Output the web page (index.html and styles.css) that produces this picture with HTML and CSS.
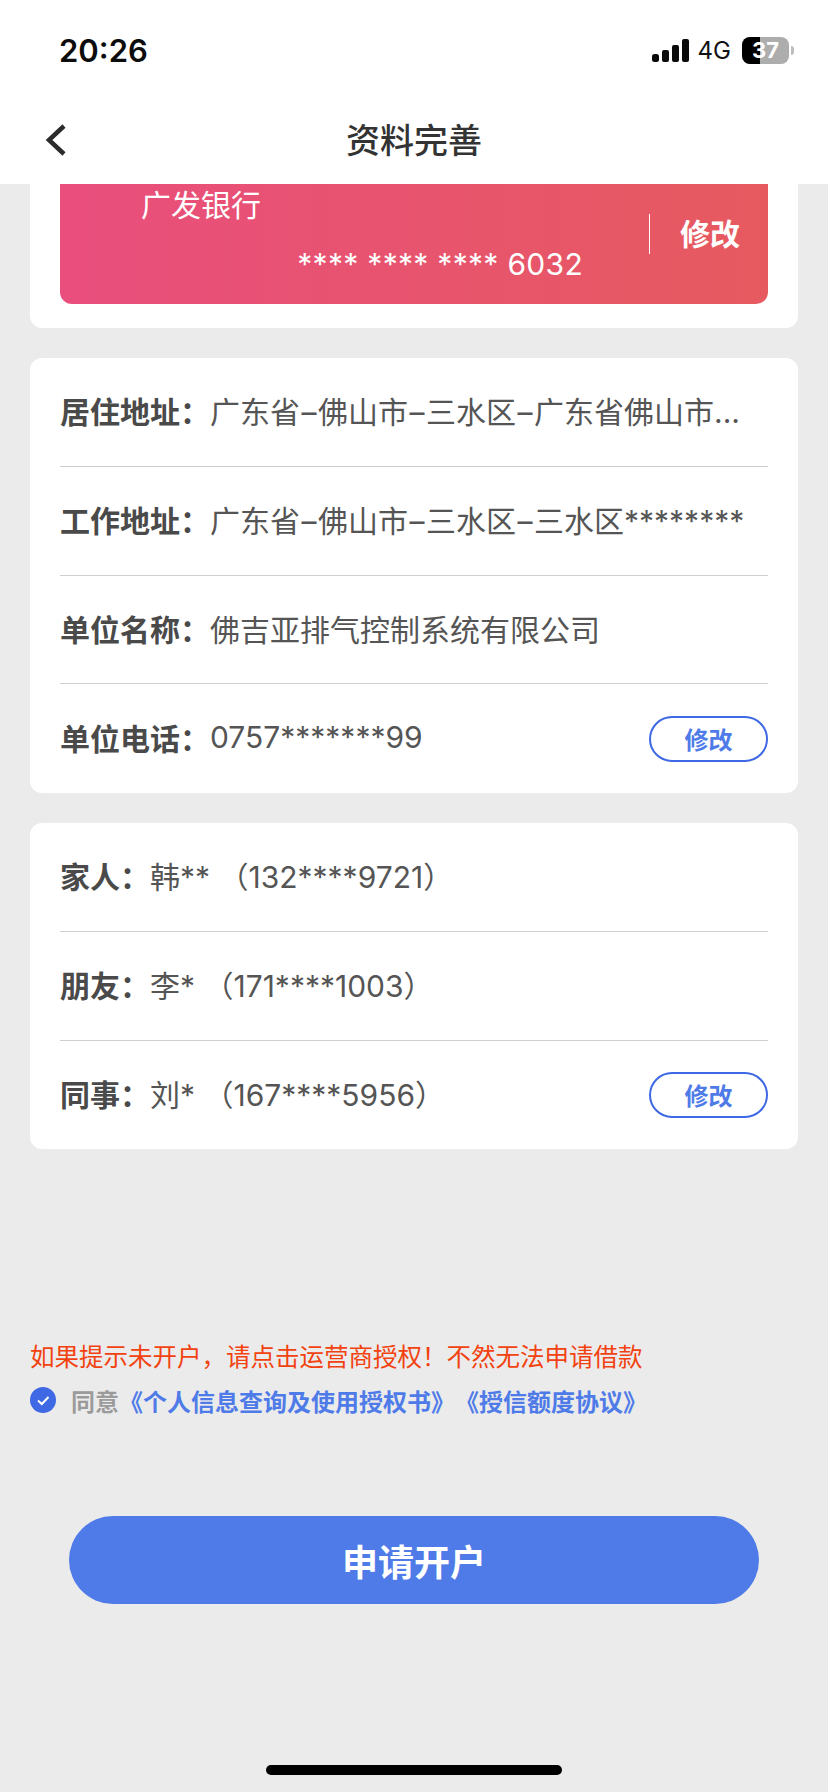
FILE: index.html
```html
<!DOCTYPE html>
<html lang="zh-CN">
<head>
    <meta charset="UTF-8">
    <meta name="viewport" content="width=device-width, initial-scale=1.0">
    <title>资料完善</title>
    <link rel="stylesheet" href="styles.css">
</head>
<body>
<div class="phone">
    <header class="top">
        <div class="status-bar">
            <span class="time">20:26</span>
            <div class="status-right">
                <svg class="signal" width="37" height="23" viewBox="0 0 37 23">
                    <rect x="0" y="15" width="7" height="8" rx="2.5"/>
                    <rect x="10" y="11" width="7" height="12" rx="2"/>
                    <rect x="20" y="6" width="7" height="17" rx="2"/>
                    <rect x="30" y="0" width="7" height="23" rx="2"/>
                </svg>
                <span class="net">4G</span>
                <div class="battery">
                    <div class="battery-fill"></div>
                    <span class="battery-num">37</span>
                </div>
                <div class="battery-cap"></div>
            </div>
        </div>
        <div class="nav">
            <svg class="back" width="22" height="32" viewBox="0 0 22 32">
                <path d="M19 2 L4 16 L19 30" fill="none" stroke="#2b2b2b" stroke-width="4.5"/>
            </svg>
            <h1>资料完善</h1>
        </div>
    </header>

    <main>
        <section class="card card-bank">
            <div class="bank">
                <div class="bank-info">
                    <div class="bank-name">广发银行</div>
                    <div class="bank-no">**** **** **** 6032</div>
                </div>
                <div class="bank-edit">修改</div>
            </div>
        </section>

        <section class="card">
            <div class="row">
                <span class="label">居住地址：</span>
                <span class="value">广东省<span class="dash">–</span>佛山市<span class="dash">–</span>三水区<span class="dash">–</span>广东省佛山市...</span>
            </div>
            <div class="row">
                <span class="label">工作地址：</span>
                <span class="value">广东省<span class="dash">–</span>佛山市<span class="dash">–</span>三水区<span class="dash">–</span>三水区********</span>
            </div>
            <div class="row">
                <span class="label">单位名称：</span>
                <span class="value">佛吉亚排气控制系统有限公司</span>
            </div>
            <div class="row">
                <span class="label">单位电话：</span>
                <span class="value">0757*******99</span>
                <button class="edit-btn">修改</button>
            </div>
        </section>

        <section class="card">
            <div class="row">
                <span class="label">家人：</span>
                <span class="value">韩** （132****9721）</span>
            </div>
            <div class="row">
                <span class="label">朋友：</span>
                <span class="value">李* （171****1003）</span>
            </div>
            <div class="row">
                <span class="label">同事：</span>
                <span class="value">刘* （167****5956）</span>
                <button class="edit-btn">修改</button>
            </div>
        </section>

        <p class="notice">如果提示未开户，请点击运营商授权！不然无法申请借款</p>
        <div class="agree">
            <svg class="check" width="26" height="26" viewBox="0 0 26 26">
                <circle cx="13" cy="13" r="13" fill="#3e68e4"/>
                <path d="M8 13.5 L11.8 17 L18.5 10" fill="none" stroke="#fff" stroke-width="2"/>
            </svg>
            <span class="agree-text">同意</span>
            <span class="agree-link">《个人信息查询及使用授权书》《授信额度协议》</span>
        </div>

        <button class="submit">申请开户</button>
    </main>

    <div class="home-bar"></div>
</div>
</body>
</html>
```

FILE: styles.css
```css
* {
    box-sizing: border-box;
}

body {
    margin: 0;
    padding: 0;
    background: #ebebeb;
    font-family: "Inter", "Noto Sans CJK SC", sans-serif;
}

.phone {
    width: 828px;
    height: 1792px;
    display: flex;
    flex-direction: column;
    overflow: hidden;
    position: relative;
}

.top {
    height: 184px;
    background: #fff;
    flex-shrink: 0;
}

.status-bar {
    height: 100px;
    padding: 0 34px 0 59px;
    display: flex;
    justify-content: space-between;
    align-items: center;
}

.time {
    font-size: 31px;
    font-weight: 600;
    color: #0c0c0c;
}

.status-right {
    display: flex;
    align-items: center;
}

.signal {
    fill: #0a0a0a;
}

.net {
    font-size: 24px;
    color: #111;
    margin: 0 11px 0 9px;
}

.battery {
    width: 47px;
    height: 27px;
    border-radius: 8px;
    background: #adadad;
    position: relative;
    overflow: hidden;
    display: flex;
    justify-content: center;
    align-items: center;
}

.battery-fill {
    position: absolute;
    left: 0;
    top: 0;
    bottom: 0;
    width: 18px;
    background: #000;
}

.battery-num {
    position: relative;
    color: #fff;
    font-size: 22px;
    font-weight: 700;
}

.battery-cap {
    width: 3px;
    height: 9px;
    margin-left: 2px;
    border-radius: 0 3px 3px 0;
    background: #bdbdbd;
}

.nav {
    height: 84px;
    padding-bottom: 8px;
    position: relative;
    display: flex;
    align-items: center;
    justify-content: center;
}

.back {
    position: absolute;
    left: 45px;
    top: 24px;
}

.nav h1 {
    margin: 0;
    font-size: 34px;
    font-weight: 500;
    color: #333;
}

main {
    flex: 1;
    padding: 0 30px;
    display: flex;
    flex-direction: column;
}

.card {
    background: #fff;
    border-radius: 12px;
    padding: 0 30px;
    margin-bottom: 30px;
}

.card-bank {
    height: 144px;
    border-radius: 0 0 12px 12px;
}

.bank {
    height: 120px;
    border-radius: 0 0 12px 12px;
    background: linear-gradient(90deg, #e94e7d, #e65a5f);
    display: flex;
    align-items: center;
    color: #fff;
}

.bank-info {
    flex: 1;
    height: 100%;
    padding-right: 66px;
    display: flex;
    flex-direction: column;
    font-size: 30px;
}

.bank-name {
    margin: -3px 0 0 81px;
}

.bank-no {
    margin-top: 21px;
    text-align: right;
    letter-spacing: 0.3px;
}

.bank-edit {
    width: 119px;
    height: 40px;
    margin-bottom: 20px;
    border-left: 1px solid #fff;
    font-size: 30px;
    font-weight: 700;
    line-height: 40px;
    text-align: right;
    padding-right: 28px;
}

.row {
    height: 108.75px;
    padding-bottom: 3px;
    display: flex;
    align-items: center;
    font-size: 30px;
    border-bottom: 1px solid #cfcfcf;
}

.row:last-child {
    border-bottom: none;
}

.label {
    font-weight: 700;
    color: #4a4a4a;
    white-space: nowrap;
    flex-shrink: 0;
}

.value {
    color: #555;
    white-space: nowrap;
    flex: 1;
}

.dash {
    padding: 0 1.5px;
}

.edit-btn {
    width: 119px;
    height: 46px;
    margin-bottom: -3px;
    border: 2px solid #3e68e4;
    border-radius: 23px;
    background: #fff;
    color: #4f7be8;
    font-family: inherit;
    font-size: 24px;
    font-weight: 700;
    padding: 0;
}

.notice {
    margin: 160px 0 0 0;
    font-size: 24.5px;
    line-height: 36px;
    color: #f2420f;
    white-space: nowrap;
}

.agree {
    margin-top: 7px;
    height: 36px;
    display: flex;
    align-items: center;
    font-size: 24px;
    font-weight: 700;
    white-space: nowrap;
    text-spacing-trim: space-all;
}

.check {
    margin-right: 15px;
}

.agree-text {
    color: #9b9b9b;
}

.agree-link {
    color: #4f7be8;
}

.submit {
    width: 690px;
    height: 88px;
    margin: 98px 0 0 39px;
    border: none;
    border-radius: 44px;
    background: #4f7be8;
    color: #fff;
    font-family: inherit;
    font-size: 36px;
    font-weight: 700;
}

.home-bar {
    position: absolute;
    left: 266px;
    bottom: 17px;
    width: 296px;
    height: 10px;
    border-radius: 5px;
    background: #000;
}
```
